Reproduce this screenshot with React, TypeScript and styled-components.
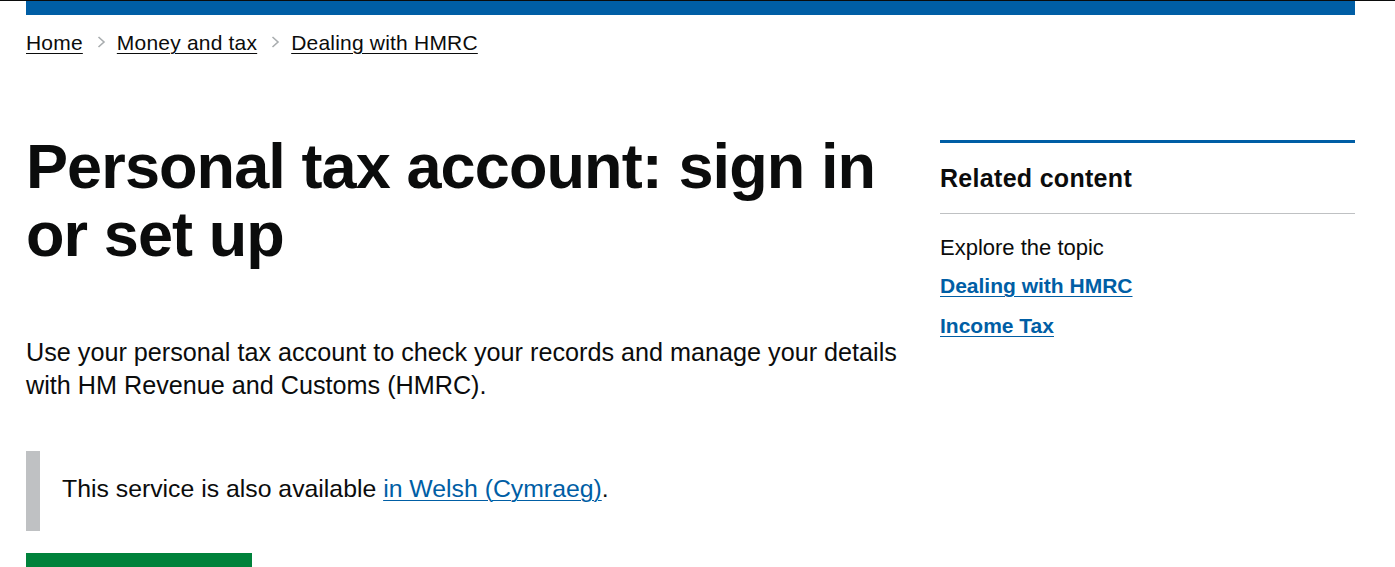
import React from "react";
import styled, { createGlobalStyle } from "styled-components";

const GlobalStyle = createGlobalStyle`
  html, body {
    margin: 0;
    padding: 0;
    background: #ffffff;
  }
  body {
    font-family: "Liberation Sans", Arial, sans-serif;
    color: #0b0c0c;
    overflow: hidden;
  }
  * { box-sizing: border-box; }
`;

const HeaderEdge = styled.div`
  height: 1px;
  background: #0b0c0c;
`;

const Container = styled.div`
  padding: 0 40px 0 26px;
`;

const BlueBar = styled.div`
  height: 14px;
  background: #005ea5;
`;

const Breadcrumbs = styled.nav`
  display: flex;
  align-items: center;
  margin-top: 15px;
  font-size: 21px;
  line-height: 25px;
  letter-spacing: 0.2px;
`;

const CrumbLink = styled.a`
  color: #0b0c0c;
  text-decoration: underline;
  text-decoration-thickness: 1px;
  text-underline-offset: 3px;
`;

const Chevron = styled.svg`
  display: block;
  width: 9px;
  height: 12px;
  margin: 0 11px 2px 14px;
`;

const Grid = styled.div`
  display: grid;
  grid-template-columns: 1fr 415px;
  column-gap: 38px;
  margin-top: 77px;
`;

const Main = styled.main`
  display: flex;
  flex-direction: column;
  align-items: flex-start;
`;

const Title = styled.h1`
  margin: 0;
  font-size: 63px;
  line-height: 68px;
  font-weight: 700;
  letter-spacing: -0.9px;
`;

const Lead = styled.p`
  margin: 68px 0 0;
  font-size: 25.2px;
  line-height: 33px;
`;

const Inset = styled.div`
  align-self: stretch;
  margin-top: 49px;
  padding: 21px 0 26px 22px;
  border-left: 14px solid #bfc1c3;
  font-size: 24.8px;
  line-height: 33px;
`;

const TextLink = styled.a`
  color: #005ea5;
  text-decoration: underline;
  text-decoration-thickness: 1px;
  text-underline-offset: 3px;
`;

const StartButton = styled.a`
  display: block;
  margin-top: 22px;
  width: 226px;
  height: 52px;
  background: #00823b;
  box-shadow: 0 3px 0 #003418;
`;

const Aside = styled.aside`
  margin-top: 8px;
  border-top: 3px solid #005ea5;
`;

const AsideHeading = styled.h2`
  margin: 0;
  padding: 20px 0;
  font-size: 25px;
  line-height: 30px;
  font-weight: 700;
  letter-spacing: 0.3px;
  border-bottom: 1px solid #bfc1c3;
`;

const Topic = styled.p`
  margin: 20px 0 11px;
  font-size: 22px;
  line-height: 28px;
`;

const RelatedList = styled.ul`
  list-style: none;
  margin: 0;
  padding: 0;
  display: flex;
  flex-direction: column;
  gap: 15px;
`;

const RelatedLink = styled.a`
  display: inline-block;
  color: #005ea5;
  font-size: 21px;
  line-height: 25px;
  font-weight: 700;
  text-decoration: underline;
  text-decoration-thickness: 1px;
  text-underline-offset: 3px;
`;

const Sep = () => (
  <Chevron viewBox="0 0 9 12" aria-hidden="true">
    <polyline points="1.5,1 7,6 1.5,11" fill="none" stroke="#a9adaf" strokeWidth="1.6" />
  </Chevron>
);

export default function App() {
  return (
    <>
      <GlobalStyle />
      <HeaderEdge />
      <Container>
        <BlueBar />
        <Breadcrumbs aria-label="Breadcrumb">
          <CrumbLink href="#">Home</CrumbLink>
          <Sep />
          <CrumbLink href="#">Money and tax</CrumbLink>
          <Sep />
          <CrumbLink href="#">Dealing with HMRC</CrumbLink>
        </Breadcrumbs>
        <Grid>
          <Main>
            <Title>Personal tax account: sign in or set up</Title>
            <Lead>
              Use your personal tax account to check your records and manage your details with HM
              Revenue and Customs (HMRC).
            </Lead>
            <Inset>
              This service is also available <TextLink href="#">in Welsh (Cymraeg)</TextLink>.
            </Inset>
            <StartButton href="#" aria-label="Sign in" role="button" />
          </Main>
          <Aside>
            <AsideHeading>Related content</AsideHeading>
            <Topic>Explore the topic</Topic>
            <RelatedList>
              <li>
                <RelatedLink href="#">Dealing with HMRC</RelatedLink>
              </li>
              <li>
                <RelatedLink href="#">Income Tax</RelatedLink>
              </li>
            </RelatedList>
          </Aside>
        </Grid>
      </Container>
    </>
  );
}
